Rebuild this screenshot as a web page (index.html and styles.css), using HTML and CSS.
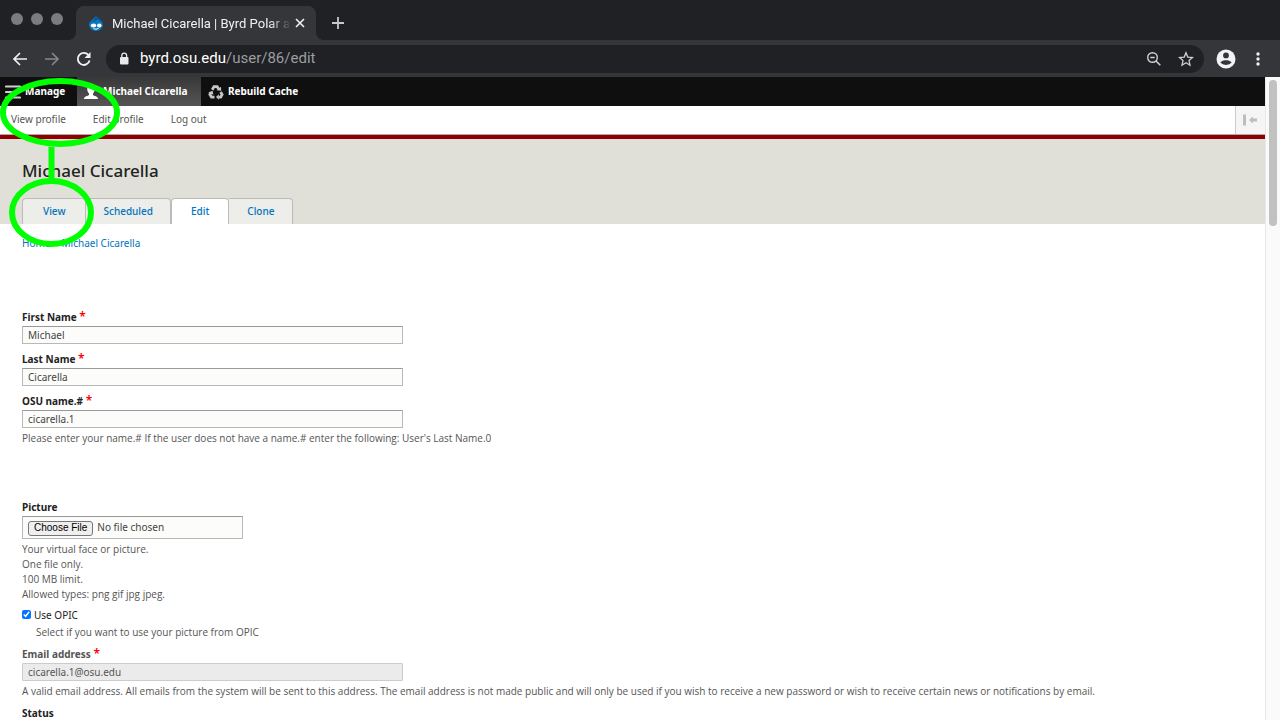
FILE: index.html
```html
<!DOCTYPE html>
<html lang="en">
<head>
<meta charset="utf-8">
<title>Michael Cicarella | Byrd Polar</title>
<link rel="stylesheet" href="styles.css">
</head>
<body>
<div class="browser">
  <div class="tabstrip">
    <div class="lights"><span class="light"></span><span class="light"></span><span class="light"></span></div>
    <div class="tab">
      <svg class="favicon" width="16" height="16" viewBox="0 0 16 16"><path d="M8 .5C9 3 15 5.300 15 10a6.500 5.500 0 0 1-14 0C1 6 6.500 4 8 .5z" fill="#0a78c0"/><path d="M8 .5c1 2.500 7 4.800 7 9-1-2-3-4-5-5-2 1-5 2-6 5 0-3 3-5 4-9z" fill="#075a98"/><ellipse cx="5.500" cy="10.500" rx="2.700" ry="1.900" fill="#fff"/><ellipse cx="11.300" cy="10.500" rx="2.300" ry="1.900" fill="#fff"/><path d="M5.500 13.600q2.500 1.400 5-.2" stroke="#fff" fill="none"/></svg>
      <span class="tab-title">Michael Cicarella | Byrd Polar a</span>
      <button class="chrome-btn" aria-label="Close tab"><svg width="10" height="10" viewBox="0 0 10 10"><path d="M1 1l8 8M9 1L1 9" stroke="#f1f1f2" stroke-width="1.600"/></svg></button>
    </div>
    <button class="chrome-btn new-tab" aria-label="New tab"><svg width="14" height="14" viewBox="0 0 14 14"><path d="M7 1v12M1 7h12" stroke="#c6c8ca" stroke-width="1.800"/></svg></button>
  </div>
  <div class="navbar">
    <button class="chrome-btn" aria-label="Back"><svg width="16" height="16" viewBox="0 0 16 16"><path d="M15 8H2M8 2L2 8l6 6" stroke="#f1f1f2" stroke-width="1.700" fill="none"/></svg></button>
    <button class="chrome-btn" aria-label="Forward"><svg width="16" height="16" viewBox="0 0 16 16"><path d="M1 8h13M8 2l6 6-6 6" stroke="#87888b" stroke-width="1.600" fill="none"/></svg></button>
    <button class="chrome-btn" aria-label="Reload"><svg width="16" height="16" viewBox="0 0 16 16"><path d="M13.600 9.500A6 6 0 1 1 12.300 3.900" stroke="#f1f1f2" stroke-width="1.900" fill="none"/><path d="M14.500 1v6h-6z" fill="#f1f1f2"/></svg></button>
    <div class="address">
      <svg width="10" height="13" viewBox="0 0 10 13"><rect x="1" y="5" width="8.500" height="7.500" rx="1" fill="#e8e9ea"/><path d="M2.800 5.500V3.500a2.400 2.400 0 0 1 4.800 0v2" stroke="#e8e9ea" stroke-width="1.300" fill="none"/></svg>
      <span class="url"><span class="host">byrd.osu.edu</span>/user/86/edit</span>
      <button class="chrome-btn" aria-label="Zoom"><svg width="16" height="16" viewBox="0 0 16 16"><circle cx="6.500" cy="6.500" r="4.800" fill="none" stroke="#cfd0d2" stroke-width="1.400"/><path d="M4.300 6.500h4.400M10 10l4.300 4.300" stroke="#cfd0d2" stroke-width="1.500"/></svg></button>
      <button class="chrome-btn" aria-label="Bookmark"><svg width="16" height="16" viewBox="0 0 16 16"><path d="M8 1.800l1.800 4.300 4.700.4L11 9.600l1 4.600-4-2.500-4 2.500 1-4.600-3.500-3.100 4.700-.4z" fill="none" stroke="#cfd0d2" stroke-width="1.300"/></svg></button>
    </div>
    <button class="chrome-btn" aria-label="Account"><svg width="20" height="20" viewBox="0 0 20 20"><circle cx="10" cy="10" r="9.500" fill="#f1f3f4"/><circle cx="10" cy="6.400" r="2.900" fill="#35363a"/><path d="M4.300 13.600C5.500 11.900 8 11.300 10 11.300s4.500.6 5.700 2.300A6.900 5.500 0 0 1 4.300 13.600z" fill="#35363a"/></svg></button>
    <button class="chrome-btn" aria-label="Menu"><svg width="16" height="16" viewBox="0 0 16 16"><g fill="#f1f1f2"><circle cx="8" cy="3" r="1.700"/><circle cx="8" cy="8" r="1.700"/><circle cx="8" cy="13" r="1.700"/></g></svg></button>
  </div>
</div>
<div class="viewport">
  <div class="page">
    <nav class="toolbar">
      <a href="#" class="tool manage"><svg width="16" height="16" viewBox="0 0 16 16"><path d="M1 2.500h14M1 8h14M1 13.500h14" stroke="#cfcfcf" stroke-width="2.200" stroke-linecap="round"/></svg>Manage</a>
      <a href="#" class="tool active"><svg width="16" height="16" viewBox="0 0 16 16"><path d="M8 1c2.300 0 3.800 1.700 3.800 4 0 2-1 3.500-1.800 4.500v1.500c1 1 5 1 5 4H1c0-3 4-3 5-4V9.500C5.200 8.500 4.200 7 4.200 5 4.200 2.700 5.700 1 8 1z" fill="#fff"/></svg>Michael Cicarella</a>
      <a href="#" class="tool"><svg width="16" height="16" viewBox="0 0 16 16"><g fill="none" stroke="#c6c6c6" stroke-width="2.800"><path d="M4.200 5.800L6 2.600h3.200l1.400 2.300M12.600 8l1.500 2.500-1.400 2.600h-2.200M6.500 13.100H3.500L1.900 10.500 2.900 8.500"/></g><g fill="#c6c6c6"><path d="M8.600 6.200l4.600.5-.2-4zM10.800 10.300v5.500L8 13zM.3 8.600l4.300-1.900.8 4z"/></g></svg>Rebuild Cache</a>
    </nav>
    <nav class="tray">
      <a href="#">View profile</a><a href="#">Edit profile</a><a href="#">Log out</a>
      <button class="orient" aria-label="Vertical orientation"><svg width="16" height="14" viewBox="0 0 16 14"><path d="M0 1.500h3v11H0zM6 7l4-3.500v2h4v3h-4v2z" fill="#bebebe"/></svg></button>
    </nav>
    <header class="header">
      <h1>Michael Cicarella</h1>
      <nav class="tabs"><a href="#">View</a><a href="#" class="wide">Scheduled</a><a href="#" class="current">Edit</a><a href="#">Clone</a></nav>
    </header>
    <main class="content">
      <nav class="crumbs"><a href="#">Home</a><span>»</span><a href="#">Michael Cicarella</a></nav>
      <form>
        <div class="item"><label for="first">First Name <b class="req">*</b></label><input id="first" class="text" type="text" value="Michael"></div>
        <div class="item"><label for="last">Last Name <b class="req">*</b></label><input id="last" class="text" type="text" value="Cicarella"></div>
        <div class="item name-item"><label for="osu">OSU name.# <b class="req">*</b></label><input id="osu" class="text" type="text" value="cicarella.1">
          <p class="desc">Please enter your name.# If the user does not have a name.# enter the following: User's Last Name.0</p></div>
        <div class="item picture"><label for="pic">Picture</label><input id="pic" class="file" type="file">
          <p class="desc">Your virtual face or picture.<br>One file only.<br>100 MB limit.<br>Allowed types: png gif jpg jpeg.</p></div>
        <div class="item"><div class="check"><input id="opic" type="checkbox" checked><label for="opic">Use OPIC</label></div>
          <p class="desc indent">Select if you want to use your picture from OPIC</p></div>
        <div class="item"><label class="muted" for="mail">Email address <b class="req">*</b></label><input id="mail" class="text" type="email" value="cicarella.1@osu.edu" disabled>
          <p class="desc">A valid email address. All emails from the system will be sent to this address. The email address is not made public and will only be used if you wish to receive a new password or wish to receive certain news or notifications by email.</p></div>
        <fieldset><legend>Status</legend></fieldset>
      </form>
    </main>
  </div>
  <div class="scroll"><div class="thumb"></div></div>
</div>
<svg class="marks" width="124" height="250" viewBox="0 0 124 250"><g fill="none" stroke="#0f0" stroke-width="6"><ellipse cx="60" cy="112.400" rx="57" ry="31.500"/><path d="M51.500 147v33"/><ellipse cx="51.500" cy="212.500" rx="39.500" ry="31.500"/></g></svg>
</body>
</html>
```
FILE: styles.css
```css
* { box-sizing: border-box; }
body {
  margin: 0;
  height: 100vh;
  display: flex;
  flex-direction: column;
  overflow: hidden;
  position: relative;
  background: #fff;
  color: #333;
  font: 10px/15px "Noto Sans", "Open Sans", sans-serif;
}
a { color: #0074bd; text-decoration: none; }
svg { display: block; flex: none; }

.browser { flex: none; background: #35363a; font-family: Roboto, sans-serif; }
.chrome-btn {
  flex: none;
  border: 0;
  padding: 0;
  background: none;
}
.tabstrip { display: flex; height: 40px; padding-left: 11px; background: #202124; }
.lights { display: flex; gap: 8px; width: 65px; padding-top: 13px; }
.light { width: 12px; height: 12px; border-radius: 50%; background: #7b7c7f; }
.tab {
  position: relative;
  display: flex;
  align-items: center;
  width: 240px;
  margin-top: 6px;
  padding: 0 11px 0 12px;
  border-radius: 8px 8px 0 0;
  background: #35363a;
}
.tab::before, .tab::after {
  content: "";
  position: absolute;
  bottom: 0;
  width: 8px;
  height: 8px;
}
.tab::before { left: -8px; background: radial-gradient(circle at 0 0, #202124 8px, #35363a 8px); }
.tab::after { right: -8px; background: radial-gradient(circle at 100% 0, #202124 8px, #35363a 8px); }
.tab-title {
  flex: 1;
  margin: 0 4px 0 8px;
  white-space: nowrap;
  font-size: 13px;
  color: #f1f1f2;
  -webkit-mask-image: linear-gradient(to right, #000 88%, transparent);
  mask-image: linear-gradient(to right, #000 88%, transparent);
}
.new-tab { margin: 6px 0 0 15px; }
.navbar { display: flex; align-items: center; gap: 16px; height: 37px; padding: 0 14px 0 12px; }
.address {
  flex: 1;
  display: flex;
  align-items: center;
  gap: 16px;
  height: 28px;
  margin: 0 -4px 0 -2px;
  padding: 0 10px 0 13px;
  border-radius: 14px;
  background: #202124;
}
.url { flex: 1; margin-left: -5px; font-size: 15px; color: #9a9da1; }
.host { color: #fff; }
.navbar > :last-child { margin-left: -2px; }

.viewport { flex: 1; min-height: 0; display: flex; }
.page { flex: 1; min-width: 0; overflow: hidden; }
.scroll { width: 15px; padding: 3px 3px; border-left: 1px solid #e8e8e8; background: #fafafa; }
.thumb { width: 8px; height: 146px; border-radius: 4px; background: #c1c1c1; }

.toolbar { display: flex; height: 29px; background: #0f0f0f; }
.tool {
  display: flex;
  align-items: center;
  gap: 4px;
  padding: 0 12px 0 7px;
  color: #fff;
  font-weight: 700;
}
.manage { padding-left: 5px; width: 77px; }
.active { width: 124px; padding-left: 6px; background: linear-gradient(#383838, #555); }
.tray { display: flex; align-items: center; gap: 27px; height: 29px; padding-left: 11px; border-bottom: 1px solid #aaa; }
.tray a { padding-bottom: 1px; color: #565656; }
.orient { width: 30px; height: 28px; margin-left: auto; padding: 0 7px; border: 0; border-left: 1px solid #ccc; background: #f5f5f5; }

.header { padding: 20px 22px 0; border-top: 4px solid #900000; background: #e0e0d8; }
h1 { margin: 0; font-size: 17px; line-height: 24px; font-weight: 500; color: #222; }
.tabs { display: flex; margin-top: 15px; }
.tabs a {
  height: 26px;
  padding: 5px 18px;
  border: 1px solid #bbb;
  border-bottom: 0;
  border-left-width: 0;
  border-radius: 0 4px 0 0;
  background: #ededea;
  font-weight: 500;
}
.tabs a:first-child { padding: 5px 20px; border-left-width: 1px; border-radius: 4px 4px 0 0; }
.tabs .wide { padding: 5px 17px; }
.tabs .current { padding: 5px 19px; border-left-width: 1px; border-radius: 4px 4px 0 0; background: #fff; }

.content { padding: 12px 22px; }
.crumbs { display: flex; gap: 3px; margin-bottom: 59px; }
.item { margin-bottom: 7px; }
.item:has(.text:last-child) { margin-bottom: 8px; }
.item label { display: block; height: 16px; font-weight: 700; color: #222; }
.item .muted { color: #555; }
.req { color: #f00; font-size: 12px; line-height: 10px; font-weight: 600; }
.text {
  display: block;
  width: 31%;
  min-width: 381px;
  height: 18px;
  padding: 0 5px;
  border: 1px solid #b8b8b8;
  border-top-color: #999;
  border-radius: 1px;
  background: #fcfcfa;
  color: #444;
  font: inherit;
}
.text:disabled { border-color: #ccc; background: #ebebeb; color: #555; }
.desc { margin: 3px 0 0; color: #555; font-family: "Open Sans", "Noto Sans", sans-serif; }
.item.name-item { margin-bottom: 54px; }
.item.picture { margin-bottom: 6px; }
.file {
  display: block;
  width: 221px;
  height: 23px;
  padding: 3px 5px;
  border: 1px solid #b8b8b8;
  border-top-color: #999;
  background: #fcfcfa;
  color: #444;
  font: inherit;
}
.file::file-selector-button {
  height: 15px;
  padding: 0 5px;
  border: 1px solid #767676;
  border-radius: 3px;
  background: #efefef;
  color: #000;
  font: 10px/12px "Liberation Sans", sans-serif;
}
.check { display: flex; align-items: center; gap: 3px; }
.check input { width: 9px; height: 9px; margin: 0 0 3px; accent-color: #0075ff; }
.item .check label { font-weight: 400; }
.indent { margin: 1px 0 0 14px; }
fieldset { margin: 0; padding: 0; border: 0; }
legend { padding: 0; font-weight: 700; color: #222; }

.marks { position: absolute; left: 0; top: 0; pointer-events: none; }
```
